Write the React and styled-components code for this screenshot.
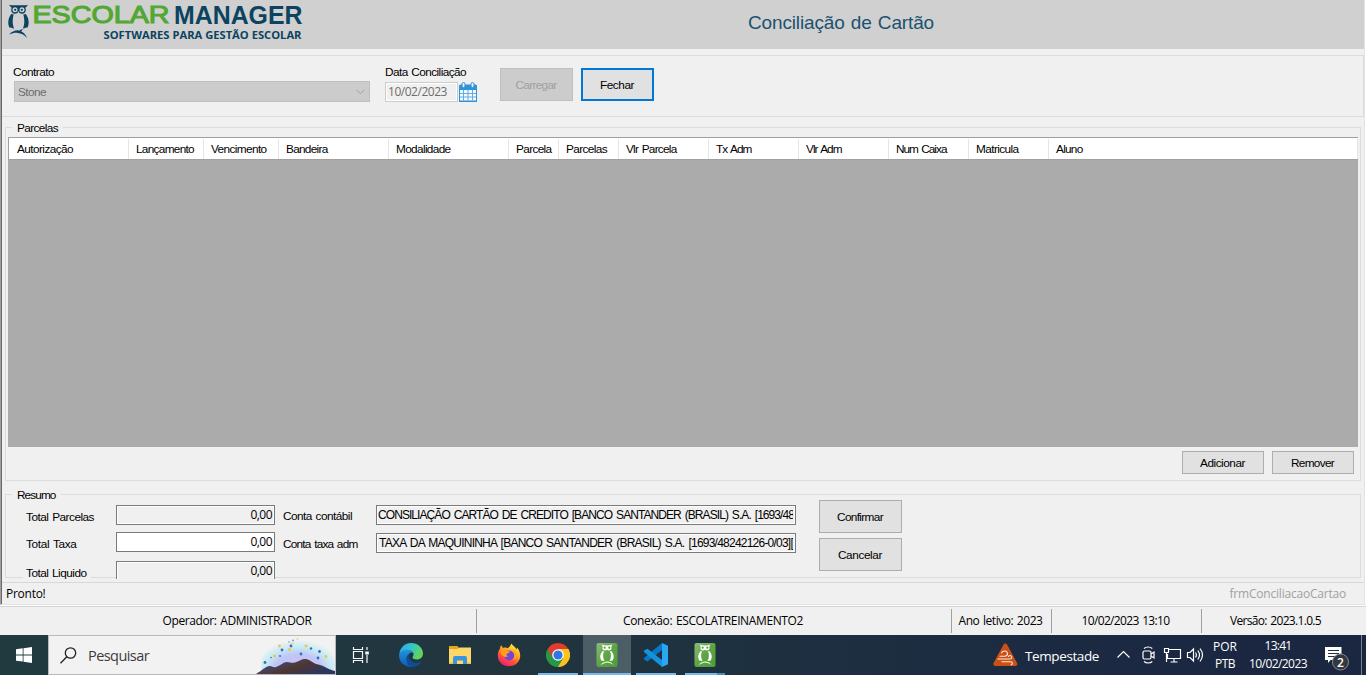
import React, { useLayoutEffect, useRef, useState } from "react";
import styled, { createGlobalStyle } from "styled-components";

const GlobalStyle = createGlobalStyle`
  * { box-sizing: border-box; }
  body { margin: 0; background: #f0f0f0; overflow: hidden; }
`;

const sans = '"Liberation Sans", Arial, sans-serif';
const ui = '"Open Sans", "Noto Sans", sans-serif';

const Screen = styled.div`
  width: 1366px;
  height: 675px;
  display: flex;
  flex-direction: column;
  overflow: hidden;
  background: #f0f0f0;
  color: #000;
  font: 11.8px/14px ${sans};
  word-spacing: 1px;
`;

/* Text whose tracking adapts so that it fills the width it is given. */
const TextSpan = styled.span`
  display: inline-block;
  flex: none;
  white-space: pre;
`;

function Text({ w, children, ...rest }) {
  const ref = useRef(null);
  const [tracking, setTracking] = useState(0);
  useLayoutEffect(() => {
    if (!w) return;
    const natural = ref.current.getBoundingClientRect().width;
    setTracking((w - natural) / String(children).length);
  }, []);
  return (
    <TextSpan ref={ref} style={{ letterSpacing: tracking }} {...rest}>
      {children}
    </TextSpan>
  );
}

/* ---------- window ---------- */
const Window = styled.main`
  height: 605px;
  display: flex;
  border-left: 1px solid #a0a0a0;
  border-right: 1px solid #fff;
  border-bottom: 1px solid #e3e3e3;
`;
const WindowBody = styled.div`
  flex: 1;
  display: flex;
  flex-direction: column;
  border-left: 1px solid #696969;
  border-right: 1px solid #e3e3e3;
`;
const Header = styled.header`
  height: 49px;
  display: flex;
  background: #d0d0d0;
`;
const Logo = styled.svg`
  width: 310px;
  height: 49px;
  display: block;
  word-spacing: 0;
`;
const Title = styled.h1`
  margin: 0;
  padding: 10px 0 0 436px;
  font: 19px/25px ${sans};
  color: #1a5270;
`;

const FilterPanel = styled.section`
  height: 62px;
  margin-top: 6px;
  padding: 9px 0 0 11px;
  display: flex;
  align-items: flex-start;
  border: 1px solid #dcdcdc;
  border-left: 0;
`;
const Field = styled.div`
  display: flex;
  flex-direction: column;
  align-items: flex-start;
  margin-right: ${(p) => p.$gap}px;
`;
const Select = styled.div`
  width: 356px;
  height: 21px;
  margin-top: 2px;
  margin-left: 1px;
  padding: 0 4px 0 3px;
  display: flex;
  align-items: center;
  justify-content: space-between;
  background: #ccc;
  border: 1px solid #bfbfbf;
  color: #6d6d6d;
`;
const DateRow = styled.div`
  display: flex;
  align-items: flex-start;
  gap: 1px;
  margin-top: 3px;
`;
const DateInput = styled.div`
  width: 73px;
  height: 20px;
  padding-left: 2px;
  display: flex;
  align-items: center;
  border: 1px solid #ccc;
  box-shadow: inset 0 0 0 1px #fff;
  color: #6d6d6d;
  font: 12px/16px ${ui};
`;
const Button = styled.button`
  width: ${(p) => p.$w}px;
  height: ${(p) => p.$h || 33}px;
  flex: none;
  padding: 0 1px 0 0;
  display: flex;
  align-items: center;
  justify-content: center;
  border: ${(p) => (p.$focus ? "2px solid #0078d7" : "1px solid #adadad")};
  background: #e1e1e1;
  color: #000;
  font: inherit;
  &:disabled {
    background: #ccc;
    border-color: #bfbfbf;
    color: #a0a0a0;
  }
`;
const FilterButtons = styled.div`
  display: flex;
  gap: 8px;
  padding-top: 3px;
`;

/* ---------- group boxes ---------- */
const GroupBox = styled.section`
  height: ${(p) => p.$h}px;
  margin: ${(p) => p.$top}px 3px 0 3px;
  display: flex;
  flex-direction: column;
  border: 1px solid #dcdcdc;
`;
const Legend = styled.div`
  align-self: flex-start;
  height: 14px;
  margin: -7px 0 0 6px;
  padding: 0 5px 0 5px;
  background: #f0f0f0;
`;
const Grid = styled.div`
  height: 310px;
  margin: 2px 2px 0 2px;
  background: #ababab;
  border-top: 1px solid #a0a0a0;
`;
const GridHead = styled.div`
  height: 22px;
  display: flex;
  padding-top: 1px;
  background: #fff;
  border-left: 1px solid #a0a0a0;
  border-bottom: 1px solid #a0a0a0;
`;
const HeadCell = styled.div`
  width: ${(p) => p.$w}px;
  padding: 3px 0 0 7px;
  border-right: 1px solid #e5e5e5;
  &:first-child { padding-left: 8px; }
`;
const GridActions = styled.div`
  display: flex;
  justify-content: flex-end;
  gap: 8px;
  padding: 4px 6px 0 0;
`;

/* ---------- summary ---------- */
const Summary = styled.div`
  display: flex;
  align-items: flex-start;
`;
const Totals = styled.div`
  display: flex;
  flex-direction: column;
  padding: 3px 0 0 20px;
`;
const TotalRow = styled.div`
  height: ${(p) => p.$h}px;
  display: flex;
  align-items: flex-start;
`;
const TotalLabel = styled.div`
  width: 90px;
  padding-top: 5px;
  span { background: #f0f0f0; box-shadow: -3px 0 #f0f0f0, 4px 0 #f0f0f0; }
`;
const Box = styled.div`
  width: ${(p) => p.$w}px;
  height: ${(p) => (p.$cut ? 18 : 20)}px;
  padding: 1px 2px 0 1px;
  display: flex;
  align-items: flex-start;
  justify-content: ${(p) => (p.$right ? "flex-end" : "flex-start")};
  overflow: hidden;
  border: 1px solid #7a7a7a;
  border-bottom-width: ${(p) => (p.$cut ? 0 : 1)}px;
  background: ${(p) => (p.$editable ? "#fff" : "#f0f0f0")};
  box-shadow: inset ${(p) => (p.$cut ? "1px 1px 0 0 #fff, inset -1px 0 0 0 #fff" : "0 0 0 1px #fff")};
  font: ${(p) => (p.$right ? `12px/16px ${ui}` : `12px/16px ${sans}`)};
  word-spacing: 1.5px;
`;
const Clip = styled.div`
  width: 416px;
  padding-left: ${(p) => p.$indent || 0}px;
  overflow: hidden;
  display: flex;
`;
const Accounts = styled.div`
  display: flex;
  flex-direction: column;
  gap: 8px;
  padding: 3px 0 0 8px;
`;
const AccountRow = styled.div`
  display: flex;
  height: 20px;
`;
const AccountLabel = styled.div`
  width: 93px;
  padding-top: 4px;
`;
const SummaryButtons = styled.div`
  display: flex;
  flex-direction: column;
  gap: 5px;
  margin: -2px 0 0 23px;
`;

const StatusLine = styled.div`
  height: 22px;
  margin-top: 4px;
  padding: 3px 18px 0 4px;
  display: flex;
  justify-content: space-between;
  border-top: 1px solid #d7d7d7;
  font: 12px/16px ${ui};
`;
const FormName = styled.div`
  color: #a0a0a0;
`;

const Footer = styled.footer`
  height: 30px;
  padding-top: 2px;
  display: flex;
  border-top: 1px solid #fff;
  box-shadow: inset 0 1px #d5d5d5;
  font: 12px/16px ${ui};
`;
const FooterCell = styled.div`
  width: ${(p) => p.$w}px;
  height: 24px;
  margin-top: 1px;
  padding-right: 2px;
  display: flex;
  align-items: center;
  justify-content: center;
  border-right: ${(p) => (p.$last ? 0 : 1)}px solid #a0a0a0;
`;

/* ---------- taskbar ---------- */
const Taskbar = styled.nav`
  height: 40px;
  display: flex;
  color: #fff;
  background: linear-gradient(90deg, #213a40 0, #21353e 38%, #1d2f40 60%, #1b2842 85%, #1b2640 100%);
  font: 12px/16px ${ui};
`;
const StartButton = styled.div`
  width: 48px;
  display: flex;
  align-items: center;
  justify-content: center;
`;
const Search = styled.div`
  width: 288px;
  display: flex;
  align-items: center;
  overflow: hidden;
  background: #f2f2f2;
  border: 1px solid #b9b9b9;
  color: #3b3b3b;
  font-size: 14.5px;
  line-height: 20px;
  > span { margin-top: 2px; }
`;
const SearchIcon = styled.svg`
  margin: 0 11px 0 11px;
`;
const SearchArt = styled.svg`
  margin-left: auto;
  flex: none;
`;
const TaskButton = styled.div`
  width: ${(p) => p.$w || 48}px;
  margin-right: 1px;
  display: flex;
  flex-direction: column;
  align-items: center;
  background: ${(p) => (p.$active ? "#4c5e65" : "transparent")};
  svg { height: 40px; flex: none; }
`;
const Indicator = styled.div`
  width: ${(p) => p.$w}px;
  height: 2px;
  margin-top: -2px;
  background: #76b9ed;
  border-right: ${(p) => (p.$stacked ? "8px solid #5589b0" : 0)};
`;
const Tray = styled.div`
  margin-left: auto;
  display: flex;
  align-items: center;
`;
const Weather = styled.div`
  display: flex;
  align-items: center;
  gap: 7px;
  margin-right: 18px;
  font-size: 13.5px;
  line-height: 20px;
  > span { margin-top: 2px; }
`;
const TrayIcons = styled.div`
  display: flex;
  align-items: center;
  margin: 0 8px 0 0;
`;
const TwoLines = styled.div`
  width: ${(p) => p.$w}px;
  margin-right: ${(p) => p.$gap}px;
  display: flex;
  flex-direction: column;
  align-items: center;
  gap: ${(p) => p.$row || 1}px;
`;
const ShowDesktop = styled.div`
  width: 5px;
  height: 40px;
  border-left: 1px solid #77808f;
`;

/* ---------- drawings ---------- */
function LogoArt() {
  return (
    <Logo viewBox="2 0 310 49">
      <g fill="#0b4361">
        <path d="M9.300 4.800c1.700.6 3.600.5 5 .5 2.800-.2 5.600-.2 8.400 0 1.500 0 3.300.2 5-.6-.5 1.300-1.200 2.200-2.300 2.800l.4 2.500c.1 2.500-2 3.900-4.100 3.700-1.200-.1-2.200-.6-3.200-1.500-1 .9-2 1.400-3.200 1.500-2.200.2-4.200-1.200-4.100-3.700l.4-2.500C10.500 6.900 9.700 6.100 9.300 4.800z" />
        <path d="M11.200 14c-2.700 3.500-4 9-1.800 13.500 1 .4 1.300-.3 2 .2.900.5 1.700 1 2.600.8-.7-2.500-1.400-4.500-1.300-7.500.1-2.800.5-4.800 1-6.500zM25.800 14c2.700 3.500 4 9 1.800 13.500-1 .4-1.300-.3-2 .2-.9.5-1.700 1-2.600.8.7-2.500 1.400-4.500 1.300-7.500-.1-2.800-.5-4.800-1-6.500z" />
        <path d="M9 34.500c3-3 5-4 8-4 4 0 8 2 10 7.500-3-3.500-6-4.700-9-5-3-.4-5 0-9 1.500z" />
        <path d="M14 29.300l2.200 2 1.500-1.200.7 2.500M23 29l-2.300 3-1.600-1.700z" />
      </g>
      <g fill="#d0d0d0">
        <circle cx="15" cy="9.800" r="2.500" /><circle cx="22" cy="9.800" r="2.500" />
        <path d="M17.500 11.500h2l-1 2z" />
      </g>
      <g fill="#0b4361"><circle cx="15.200" cy="9.800" r="1.100" /><circle cx="21.800" cy="9.800" r="1.100" /></g>
      <text x="32.500" y="23" fill="#52a832" stroke="#52a832" strokeWidth="1.100" fontFamily="Liberation Sans, Arial, sans-serif" fontSize="24.500" textLength="137" lengthAdjust="spacingAndGlyphs">ESCOLAR</text>
      <text x="174" y="23.500" fill="#0b4361" fontFamily="Liberation Sans, Arial, sans-serif" fontWeight="700" fontSize="26" textLength="128.500" lengthAdjust="spacingAndGlyphs">MANAGER</text>
      <text x="103.500" y="38.700" fill="#0b4361" fontFamily="Open Sans, Noto Sans, sans-serif" fontWeight="700" fontSize="11.400" textLength="198" lengthAdjust="spacingAndGlyphs">SOFTWARES PARA GESTÃO ESCOLAR</text>
    </Logo>
  );
}

const Calendar = () => (
  <svg width="18" height="20" viewBox="0 0 18 20">
    <path d="M0 4q0-1.500 1.500-1.500h15Q18 2.500 18 4v16H0z" fill="#2f93dc" />
    <path d="M1 8h16v10.500H1z" fill="#f5f9fc" />
    <path d="M4.500 8v10.500M9 8v10.500M13.500 8v10.500M1 11.500h16M1 15h16" stroke="#5fabe3" fill="none" />
    <rect x="3" y=".5" width="3" height="5" rx="1.500" fill="#f0f0f0" stroke="#2f93dc" />
    <rect x="12" y=".5" width="3" height="5" rx="1.500" fill="#f0f0f0" stroke="#2f93dc" />
  </svg>
);

const SearchPicture = () => (
  <SearchArt width="79" height="38" viewBox="0 0 79 38">
    <defs>
      <radialGradient id="glow" cx="50%" cy="65%" r="60%">
        <stop offset="0" stopColor="#d3e2b4" />
        <stop offset=".28" stopColor="#c9c0f4" />
        <stop offset=".55" stopColor="#bfc6f6" />
        <stop offset=".78" stopColor="#c6ebf5" />
        <stop offset="1" stopColor="#f2f2f2" />
      </radialGradient>
      <linearGradient id="hill" x1="0" y1="0" x2="1" y2=".6">
        <stop offset="0" stopColor="#454d73" />
        <stop offset=".4" stopColor="#46425c" />
        <stop offset=".62" stopColor="#4e3630" />
        <stop offset="1" stopColor="#2b3663" />
      </linearGradient>
    </defs>
    <ellipse cx="42" cy="28" rx="37" ry="27" fill="url(#glow)" />
    <path d="M0 38C5 35 9 31 13 30c3-.5 4 2 7 1 5-1.500 7-5 11-5 3 0 5 1.500 8 .5 4-1 6-3.500 10-3.500 4 0 6 2.500 10 4.500 3 1.500 5 1 9 3 4 2 7 3.500 11 4.500v3z" fill="url(#hill)" />
    <g fill="#3f68bc">
      <circle cx="9" cy="26.500" r="1.400" /><circle cx="26" cy="14" r="1.400" /><circle cx="35" cy="10" r="1.400" /><circle cx="45" cy="18" r="1.400" /><circle cx="55" cy="12.500" r="1.200" /><circle cx="63.500" cy="15.500" r="1.400" /><circle cx="62" cy="22" r="1.400" /><circle cx="24" cy="20" r="1" /><circle cx="37" cy="4.500" r="1" opacity=".6" /><circle cx="33" cy="6" r="1" opacity=".4" /><circle cx="15" cy="21.500" r=".8" />
    </g>
    <g fill="#f2c63b">
      <circle cx="23.500" cy="10" r="1.400" /><circle cx="18.500" cy="20" r="1.400" /><circle cx="33.500" cy="13.500" r="1.400" /><circle cx="50" cy="10" r="1.400" /><circle cx="70" cy="20.500" r="1.400" /><circle cx="41.500" cy="3" r="1" opacity=".6" /><circle cx="36.500" cy="7.500" r=".8" />
    </g>
  </SearchArt>
);

const EdgeIcon = () => (
  <svg width="24" viewBox="0 0 24 24">
    <defs>
      <linearGradient id="eg" x1="0" y1=".2" x2="1" y2=".5"><stop offset="0" stopColor="#31a8ea" /><stop offset=".5" stopColor="#32c6c9" /><stop offset="1" stopColor="#65d84e" /></linearGradient>
      <linearGradient id="eb" x1="0" y1="0" x2="0" y2="1"><stop offset="0" stopColor="#1d96dc" /><stop offset="1" stopColor="#1259b2" /></linearGradient>
    </defs>
    <path d="M.4 11C1 4.500 6 0 12 0c7 0 12 5 12 10.500 0 3.700-2.800 6-6 6-2.800 0-4.500-1-4.500-2 0-.8 1.100-1.300 1.100-3 0-2.500-2.600-4.500-6-4.500C4.800 7 1.800 8.700.4 11z" fill="url(#eg)" />
    <path d="M0 12.500C.5 8.500 4.600 6.800 8.300 6.800c3 0 5.200 1.200 6 3-2.800-1-5.300.8-5.300 4.200 0 4.300 3.600 6.500 7.300 6.500 2.300 0 4.300-.8 6.200-2C20.500 21.800 16.500 24 12 24 5.200 24 0 19 0 12.500z" fill="url(#eb)" />
    <path d="M9.500 11c-3.500 3-2.800 9 2 12.700 4.700.8 9-1.600 11-5.200-5 3.300-13 1-13-7.500z" fill="#0d4d93" />
  </svg>
);
const FolderIcon = () => (
  <svg width="22" viewBox="0 0 22 24">
    <path d="M0 3h8.500l1.500 2h12v16H0z" fill="#e9a419" />
    <path d="M0 6h8.500l2-1.500H22V21H0z" fill="#fdd769" />
    <path d="M4 21v-6q0-2 2-2h10q2 0 2 2v6h-4v-3.500H8V21z" fill="#3b93dc" />
    <path d="M0 19.500h4V21H0zM18 19.500h4V21h-4z" fill="#f6bf3c" />
  </svg>
);
const FirefoxIcon = () => (
  <svg width="24" viewBox="0 0 24 24">
    <defs><linearGradient id="ff" x1=".8" y1="0" x2=".25" y2="1"><stop offset="0" stopColor="#fff04b" /><stop offset=".35" stopColor="#ffb21d" /><stop offset=".65" stopColor="#ff5638" /><stop offset="1" stopColor="#ec1679" /></linearGradient></defs>
    <path d="M14.500.5c1 2 4 3.500 5 6l.5-2c2.200 2.500 3.400 5.500 3.200 9C22.800 19 18 23.300 12 23.300 5.500 23.300.8 18.500.8 12.500c0-3 .8-5 2.200-7 0-1.200.4-2.300 1.200-3.200L6 5c2-.8 3.500-.5 4.800.3 1.200-1.200 2.700-2.600 3.700-4.800z" fill="url(#ff)" />
    <circle cx="12.200" cy="12.500" r="5" fill="#7245d8" />
    <path d="M3.500 6.800C6 5.600 8 6 9.500 7.800l3.500.6c-.6 1.700-2.600 1.400-3.300 2.700-.4 1 .2 2 1.300 2.200-1.500 1-3.500.8-4.800-.3C4.500 12 3 10 3.500 6.800z" fill="#ff9d1f" />
    <path d="M15 7c3.800 2 3.300 7.800.4 9.800 3-.4 4.600-3 4.400-5.600-.3-2.700-2.400-4.300-4.800-4.200z" fill="#ffa625" />
  </svg>
);
const ChromeIcon = () => (
  <svg width="24" viewBox="0 0 24 24">
    <path d="M12 12v12A12 12 0 0 1 1.600 6z" fill="#279847" />
    <path d="M17.200 15L12 24A12 12 0 0 0 22.400 6H12z" fill="#fcc31e" />
    <path d="M6.800 15L1.600 6 9 9zM11 17l6.200-2L12 24z" fill="#279847" />
    <path d="M1.600 6a12 12 0 0 1 20.800 0H12L6.800 15z" fill="#e33b2e" />
    <path d="M17.200 15L12 24h1l9.500-18H15z" fill="#fcc31e" />
    <circle cx="12" cy="12" r="5.800" fill="#fff" /><circle cx="12" cy="12" r="4.600" fill="#3076e8" />
  </svg>
);
const OwlIcon = () => (
  <svg width="22" viewBox="0 0 22 24">
    <defs><linearGradient id="ow" x1="0" y1="0" x2="1" y2="1"><stop offset="0" stopColor="#8bbd77" /><stop offset=".5" stopColor="#5da543" /><stop offset="1" stopColor="#4d9d35" /></linearGradient></defs>
    <rect x=".5" width="21" height="24" rx="2" fill="url(#ow)" />
    <path d="M5.500 1.500c3.500 1.200 7.500 1.200 11 0l-1.200 2 .2 2.300c-.6 1.900-3.200 2.100-4.500.9-1.300 1.200-3.900 1-4.500-.9l.2-2.300z" fill="#fff" />
    <g fill="#5da543"><circle cx="8.700" cy="4.700" r="1.100" /><circle cx="13.300" cy="4.700" r="1.100" /></g>
    <path d="M7 8c-3 2.500-3.500 6.500-1.700 9.500L8.500 18c-1.800-3-1.800-7-.5-10zM15 8c3 2.500 3.500 6.500 1.700 9.500l-3.200.5c1.800-3 1.800-7 .5-10zM4.500 22c3.500-4 9-5 13 0-3.500-2.200-6-2.700-8-2.300z" fill="#fff" />
  </svg>
);
const CodeIcon = () => (
  <svg width="24" viewBox="0 0 24 24">
    <path d="M18 0v7L3.500 18.500 0 16.500v-1.500z" fill="#0878c4" />
    <path d="M18 24v-7L3.500 5.700 0 7.500V9z" fill="#1492dd" />
    <path d="M18 0l6 2.800v18.400L18 24z" fill="#2ba6f2" />
  </svg>
);
const TaskViewIcon = () => (
  <svg width="18" viewBox="0 0 18 16" fill="none" stroke="#f5f5f5" strokeWidth="1.200">
    <path d="M1.500 0v2.500h9V0M1.500 16v-2.500h9V16M1.500 4.500h9v7h-9zM15 0v3M15 8v8" />
    <path d="M13.300 4.500h3.500v3h-3.500z" fill="#fff" stroke="none" />
  </svg>
);

const columns = [
  ["Autorização", 120, 56], ["Lançamento", 75, 58], ["Vencimento", 75, 55.5], ["Bandeira", 110, 41.5],
  ["Modalidade", 120, 54.5], ["Parcela", 50, 35.5], ["Parcelas", 60, 41], ["Vlr Parcela", 90, 50.5],
  ["Tx Adm", 90, 35.5], ["Vlr Adm", 90, 35.5], ["Num Caixa", 80, 50.5], ["Matricula", 80, 42.5], ["Aluno", 309, 26.5],
];

const totals = [
  { label: "Total Parcelas", w: 68, h: 27 },
  { label: "Total Taxa", w: 50.5, h: 29, editable: true },
  { label: "Total Liquido", w: 60.5, h: 18, cut: true },
];

export default function App() {
  return (
    <Screen>
      <GlobalStyle />
      <Window>
        <WindowBody>
          <Header>
            <LogoArt />
            <Title><Text w={186}>Conciliação de Cartão</Text></Title>
          </Header>

          <FilterPanel>
            <Field $gap={15}>
              <Text w={41}>Contrato</Text>
              <Select>
                <Text w={28}>Stone</Text>
                <svg width="9" height="6" viewBox="0 0 9 6"><path d="M.5.800l4 4 4-4" fill="none" stroke="#a0a0a0" /></svg>
              </Select>
            </Field>
            <Field $gap={23}>
              <Text w={81}>Data Conciliação</Text>
              <DateRow>
                <DateInput><Text w={59}>10/02/2023</Text></DateInput>
                <Calendar />
              </DateRow>
            </Field>
            <FilterButtons>
              <Button $w={73} disabled><Text w={41}>Carregar</Text></Button>
              <Button $w={73} $focus><Text w={34}>Fechar</Text></Button>
            </FilterButtons>
          </FilterPanel>

          <GroupBox $h={354} $top={10}>
            <Legend><Text w={41}>Parcelas</Text></Legend>
            <Grid>
              <GridHead>
                {columns.map(([name, width, w]) => (
                  <HeadCell key={name} $w={width}><Text w={w}>{name}</Text></HeadCell>
                ))}
              </GridHead>
            </Grid>
            <GridActions>
              <Button $w={82} $h={23}><Text w={45}>Adicionar</Text></Button>
              <Button $w={82} $h={23}><Text w={43}>Remover</Text></Button>
            </GridActions>
          </GroupBox>

          <GroupBox $h={84} $top={13}>
            <Legend><Text w={38.5}>Resumo</Text></Legend>
            <Summary>
              <Totals>
                {totals.map((t) => (
                  <TotalRow key={t.label} $h={t.h}>
                    <TotalLabel><Text w={t.w}>{t.label}</Text></TotalLabel>
                    <Box $w={159} $right $editable={t.editable} $cut={t.cut}><Text w={21.5}>0,00</Text></Box>
                  </TotalRow>
                ))}
              </Totals>
              <Accounts>
                <AccountRow>
                  <AccountLabel><Text w={69}>Conta contábil</Text></AccountLabel>
                  <Box $w={420}>
                    <Clip><Text w={416}>CONSILIAÇÃO CARTÃO DE CREDITO [BANCO SANTANDER (BRASIL) S.A. [1693/48</Text></Clip>
                  </Box>
                </AccountRow>
                <AccountRow>
                  <AccountLabel><Text w={74.5}>Conta taxa adm</Text></AccountLabel>
                  <Box $w={420}>
                    <Clip $indent={1}><Text w={414}>TAXA DA MAQUININHA [BANCO SANTANDER (BRASIL) S.A. [1693/48242126-0/03][</Text></Clip>
                  </Box>
                </AccountRow>
              </Accounts>
              <SummaryButtons>
                <Button $w={83}><Text w={46}>Confirmar</Text></Button>
                <Button $w={83}><Text w={44}>Cancelar</Text></Button>
              </SummaryButtons>
            </Summary>
          </GroupBox>

          <StatusLine>
            <Text w={39.5}>Pronto!</Text>
            <FormName><Text w={116.5}>frmConciliacaoCartao</Text></FormName>
          </StatusLine>
        </WindowBody>
      </Window>

      <Footer>
        <FooterCell $w={477}><Text w={149}>Operador: ADMINISTRADOR</Text></FooterCell>
        <FooterCell $w={475}><Text w={180}>Conexão: ESCOLATREINAMENTO2</Text></FooterCell>
        <FooterCell $w={100}><Text w={84}>Ano letivo: 2023</Text></FooterCell>
        <FooterCell $w={150}><Text w={88}>10/02/2023 13:10</Text></FooterCell>
        <FooterCell $w={149} $last><Text w={91}>Versão: 2023.1.0.5</Text></FooterCell>
      </Footer>

      <Taskbar>
        <StartButton>
          <svg width="16" height="16" viewBox="0 0 16 16" fill="#fff"><path d="M0 2.200l6.700-.9v6.200H0zM7.500 1.200L16 0v7.500H7.500zM0 8.400h6.700v6.200L0 13.700zM7.500 8.400H16V16l-8.500-1.200z" /></svg>
        </StartButton>
        <Search>
          <SearchIcon width="17" height="17" viewBox="0 0 17 17" fill="none" stroke="#222" strokeWidth="1.300"><circle cx="10.500" cy="6" r="5.200" /><path d="M6.800 9.800L.5 16.300" /></SearchIcon>
          <Text w={61}>Pesquisar</Text>
          <SearchPicture />
        </Search>
        <TaskButton $w={49}><TaskViewIcon /></TaskButton>
        <TaskButton $w={49}><EdgeIcon /></TaskButton>
        <TaskButton><FolderIcon /></TaskButton>
        <TaskButton><FirefoxIcon /></TaskButton>
        <TaskButton><ChromeIcon /><Indicator $w={40} /></TaskButton>
        <TaskButton $active><OwlIcon /><Indicator $w={48} /></TaskButton>
        <TaskButton><CodeIcon /><Indicator $w={40} /></TaskButton>
        <TaskButton><OwlIcon /><Indicator $w={40} $stacked /></TaskButton>
        <Tray>
          <Weather>
            <svg width="25" height="24" viewBox="0 0 25 24">
              <path d="M12.300 2.500L22.300 21H2.300z" fill="#cb5015" stroke="#cb5015" strokeWidth="4" strokeLinejoin="round" />
              <path d="M8.500 10.500c.5-3.500 6-3.300 6 .2 0 1.800-1.500 2.500-3 2.500H6.500M4.500 16h12c3 0 2.800-3.500.5-3.500-1.200 0-1.600.8-1.500 1.500M8.500 18.800h9c2.500 0 2.300 3 .3 3" fill="none" stroke="#ffe9da" strokeWidth="1.100" />
            </svg>
            <Text w={74}>Tempestade</Text>
          </Weather>
          <TrayIcons>
            <svg width="88" height="20" viewBox="0 0 88 20" fill="none" stroke="#fff" strokeWidth="1.200">
              <path d="M.5 12.500l6-6 6 6" />
              <path d="M27 3.500c2.300-2 6-2 8.300 0M27 16.500c2.300 2 6 2 8.300 0" />
              <rect x="26" y="6" width="8" height="8" rx="1.500" /><path d="M34 9l3-2v6l-3-2" />
              <path d="M52 4.500h11.500v9H50.500V9M57 13.500V17M53.500 17h7M47.500 3.500h4v4h-4zM49.500 7.500v9.500" />
              <path d="M70.500 7.500h2.500l3.500-3.500v12l-3.500-3.500h-2.500zM78.500 7.500q1.700 2.500 0 5M80.800 5.500q3.400 4.500 0 9M83 3.500q5 6.500 0 13" />
            </svg>
          </TrayIcons>
          <TwoLines $w={24} $gap={12}><Text w={24}>POR</Text><Text w={20}>PTB</Text></TwoLines>
          <TwoLines $w={58} $gap={18} $row={2}><Text w={27}>13:41</Text><Text w={58}>10/02/2023</Text></TwoLines>
          <svg width="36" height="40" viewBox="0 0 36 40">
            <path d="M0 12h16.500v13H5.500l-2.500 3v-3H0z" fill="#fff" />
            <path d="M3 15.500h11M3 18.500h11M3 21.500h7" stroke="#26304a" />
            <circle cx="15.500" cy="27" r="8" fill="#33383f" stroke="#858a93" />
            <text x="15.500" y="31.500" textAnchor="middle" fill="#fff" fontFamily="Open Sans, sans-serif" fontWeight="600" fontSize="12">2</text>
          </svg>
          <ShowDesktop />
        </Tray>
      </Taskbar>
    </Screen>
  );
}
